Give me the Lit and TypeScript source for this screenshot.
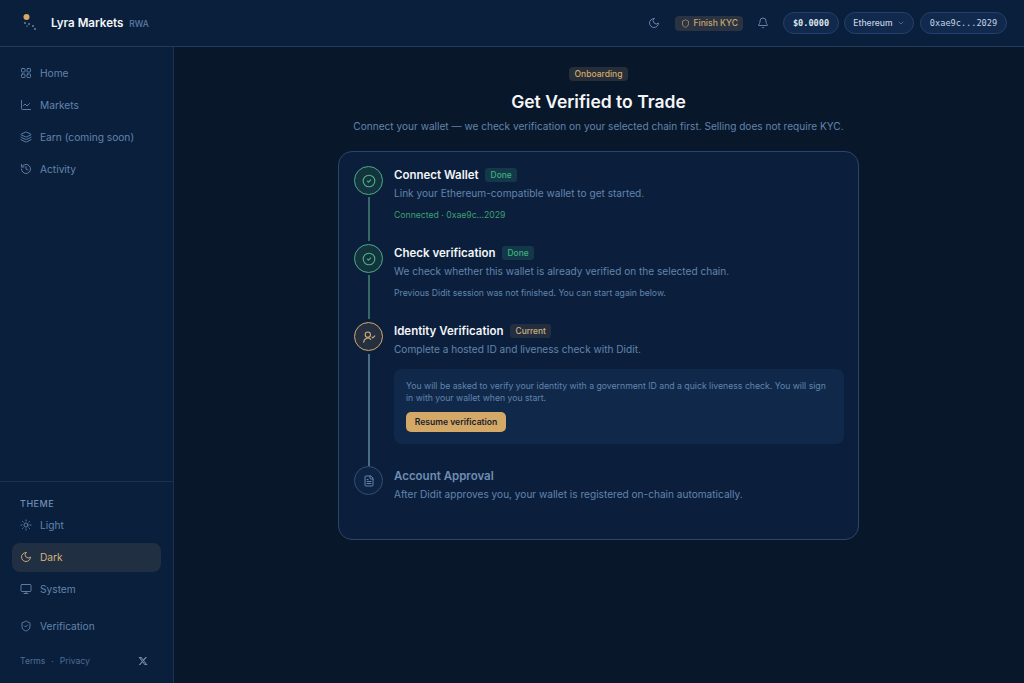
import { LitElement, html, css, svg } from "lit";
import { customElement } from "lit/decorators.js";

const ic = (body: unknown, size = 12, sw = 1.8) => html`<svg width=${size} height=${size} viewBox="0 0 24 24" fill="none" stroke="currentColor" stroke-width=${sw} stroke-linecap="round" stroke-linejoin="round">${body}</svg>`;

const I = {
  home: svg`<rect x="3" y="3" width="7" height="7" rx="1.5"/><rect x="14" y="3" width="7" height="7" rx="1.5"/><rect x="3" y="14" width="7" height="7" rx="1.5"/><rect x="14" y="14" width="7" height="7" rx="1.5"/>`,
  chart: svg`<path d="M3 3v16a2 2 0 0 0 2 2h16"/><path d="m19 9-5 5-4-4-3 3"/>`,
  layers: svg`<path d="M12.83 2.18a2 2 0 0 0-1.66 0L2.6 6.08a1 1 0 0 0 0 1.83l8.58 3.91a2 2 0 0 0 1.66 0l8.58-3.9a1 1 0 0 0 0-1.83z"/><path d="M2 12a1 1 0 0 0 .58.91l8.6 3.91a2 2 0 0 0 1.65 0l8.58-3.9A1 1 0 0 0 22 12"/><path d="M2 17a1 1 0 0 0 .58.91l8.6 3.91a2 2 0 0 0 1.65 0l8.58-3.9A1 1 0 0 0 22 17"/>`,
  history: svg`<path d="M3 12a9 9 0 1 0 9-9 9.75 9.75 0 0 0-6.74 2.74L3 8"/><path d="M3 3v5h5"/><path d="M12 7v5l4 2"/>`,
  sun: svg`<circle cx="12" cy="12" r="4"/><path d="M12 2v2M12 20v2M4.93 4.93l1.41 1.41M17.66 17.66l1.41 1.41M2 12h2M20 12h2M6.34 17.66l-1.41 1.41M19.07 4.93l-1.41 1.41"/>`,
  moon: svg`<path d="M12 3a6 6 0 0 0 9 9 9 9 0 1 1-9-9Z"/>`,
  monitor: svg`<rect x="2" y="3" width="20" height="14" rx="2"/><path d="M8 21h8M12 17v4"/>`,
  shieldCheck: svg`<path d="M20 13c0 5-3.5 7.5-7.66 8.95a1 1 0 0 1-.67-.01C7.5 20.5 4 18 4 13V6a1 1 0 0 1 1-1c2 0 4.5-1.2 6.24-2.72a1.17 1.17 0 0 1 1.52 0C14.51 3.81 17 5 19 5a1 1 0 0 1 1 1z"/><path d="m9 12 2 2 4-4"/>`,
  shield: svg`<path d="M20 13c0 5-3.5 7.5-7.66 8.95a1 1 0 0 1-.67-.01C7.5 20.5 4 18 4 13V6a1 1 0 0 1 1-1c2 0 4.5-1.2 6.24-2.72a1.17 1.17 0 0 1 1.52 0C14.51 3.81 17 5 19 5a1 1 0 0 1 1 1z"/>`,
  bell: svg`<path d="M10.27 21a2 2 0 0 0 3.46 0"/><path d="M3.26 15.33A1 1 0 0 0 4 17h16a1 1 0 0 0 .74-1.67C19.41 13.96 18 12.5 18 8A6 6 0 0 0 6 8c0 4.5-1.41 5.96-2.74 7.33"/>`,
  chevron: svg`<path d="m6 9 6 6 6-6"/>`,
  check: svg`<circle cx="12" cy="12" r="10"/><path d="m9 12 2 2 4-4"/>`,
  userCheck: svg`<path d="M3 21a7 7 0 0 1 12-5"/><circle cx="10" cy="8" r="4.5"/><path d="m17 12 1.5 1.5 3.5-3.5"/>`,
  file: svg`<path d="M15 2H6a2 2 0 0 0-2 2v16a2 2 0 0 0 2 2h12a2 2 0 0 0 2-2V7Z"/><path d="M14 2v4a2 2 0 0 0 2 2h4"/><path d="M16 13H8M16 17H8M10 9H8"/>`,
};

@customElement("app-root")
export class AppRoot extends LitElement {
  static styles = css`
    :host { display: block; width: 1024px; height: 683px; overflow: hidden; background: #081729; font-family: Inter, "Noto Sans", sans-serif; color: #f4f6f8; }
    * { box-sizing: border-box; }
    svg { display: block; flex: none; }
    .top { height: 47px; background: #0a1f3c; border-bottom: 1px solid #233a5a; display: flex; align-items: center; padding: 0 17px 0 19px; }
    .logo { width: 22px; height: 22px; margin-right: 10px; }
    .brand { font-size: 11.6px; font-weight: 600; color: #f3f5f7; }
    .rwa { font-size: 8.5px; font-weight: 500; color: #5b7ca6; margin-left: 6px; margin-top: 2px; }
    .spacer { flex: 1; }
    .tool { color: #6f8db3; display: flex; }
    .kyc { display: flex; align-items: center; gap: 3px; height: 15px; padding: 0 5px 0 6px; background: #2a3341; border-radius: 4px; color: #c9a56f; font-size: 8.6px; font-weight: 500; margin: 0 14px 0 15px; }
    .pill { height: 22px; border: 1px solid #24406a; background: #10294d; border-radius: 11px; display: flex; align-items: center; justify-content: center; font-size: 8.6px; font-weight: 500; color: #c5d2e2; }
    .mono { font-family: "DejaVu Sans Mono", "Liberation Mono", monospace; font-size: 8.6px; }
    .bal { width: 56px; margin: 0 5px 0 14px; font-weight: 700; color: #dfe6ee; }
    .net { width: 70px; gap: 4px; margin-right: 6px; }
    .net svg { color: #6f8db3; }
    .addr { width: 87px; }
    .body { display: flex; height: 636px; }
    .side { width: 174px; background: #0a1f3c; border-right: 1px solid #1c3150; display: flex; flex-direction: column; padding-top: 10px; }
    .nav { padding: 0 12px; display: flex; flex-direction: column; }
    .item { height: 32px; display: flex; align-items: center; gap: 8px; padding: 0 8px; font-size: 10.2px; color: #6284ad; border-radius: 8px; }
    .grow { flex: 1; }
    .theme { border-top: 1px solid #1c3150; padding-top: 16px; height: 164px; }
    .label { font-size: 9px; font-weight: 500; letter-spacing: 0.5px; color: #6f8db3; padding: 0 20px; line-height: 11px; }
    .item.active { background: #212f42; color: #d4b27c; height: 29px; margin: 1.5px 0; }
    .ver { height: 30px; margin-top: 6px; }
    .foot { display: flex; align-items: center; padding: 0 25px 6px 20px; font-size: 8.6px; color: #4d6c93; height: 38px; gap: 6px; }
    .foot .x { margin-left: auto; color: #7f97b5; }
    main { flex: 1; display: flex; flex-direction: column; align-items: center; padding: 20px 1px 0 0; }
    .tag { height: 14px; padding: 0 6px; background: #262e3a; color: #d4a968; font-size: 8.5px; font-weight: 500; border-radius: 4px; display: flex; align-items: center; }
    h1 { margin: 8px 0 0; font-size: 17.5px; line-height: 26px; font-weight: 600; color: #f5f6f8; }
    .sub { margin: 3px 0 0; font-size: 10.1px; line-height: 16px; color: #6284ad; }
    .card { width: 521px; height: 389px; margin-top: 17px; background: #0b1f3c; border: 1px solid #2b4568; border-radius: 14px; padding: 14px 14px 0 15px; display: flex; flex-direction: column; }
    .step { display: flex; gap: 11px; }
    .rail { width: 29px; flex: none; display: flex; flex-direction: column; align-items: center; }
    .dot { width: 29px; height: 29px; flex: none; border-radius: 50%; display: flex; align-items: center; justify-content: center; border: 1.5px solid; }
    .done .dot { border-color: #49ad7c; background: #13343f; color: #4fb583; }
    .cur .dot { border-color: #d4a968; background: #242f3f; color: #d4b27c; }
    .todo .dot { border-color: #35506f; background: #0d2444; color: #6f8db3; }
    .line { width: 2px; flex: 1; background: #2f4e68; margin: 2px 0 3px; }
    .done .line { background: #356a66; }
    .cur .line { background: #4a6f85; margin-top: 3px; margin-bottom: 0; }
    .txt { flex: 1; padding-top: 1px; }
    .todo .txt { padding-top: 2px; }
    .head { display: flex; align-items: center; gap: 6.5px; height: 15px; }
    .title { font-size: 11.5px; font-weight: 600; color: #f3f5f7; }
    .todo .title { color: #6f8db3; }
    .chip { height: 14px; padding: 0 5.5px; border-radius: 3px; font-size: 8.4px; font-weight: 500; display: flex; align-items: center; }
    .chip.ok { background: #13384a; color: #41b17b; }
    .chip.now { background: #232f40; color: #d4b27c; }
    .desc { font-size: 10.1px; line-height: 14px; color: #6284ad; margin-top: 4px; }
    .note { font-size: 8.66px; line-height: 12px; margin-top: 9px; color: #6284ad; }
    .note.g { color: #3e9f72; }
    .s1 { height: 78px; }
    .s3 { height: 144px; }
    .panel { margin-top: 13px; height: 75px; background: #10294a; border-radius: 8px; padding: 11px 12px; font-size: 8.7px; line-height: 12px; color: #6284ad; }
    .btn { margin-top: 8px; height: 20px; width: 100px; background: #d4a968; color: #18202c; border: 0; border-radius: 5px; font: 600 8.6px Inter, sans-serif; padding: 0; display: block; }
  `;

  nav(icon: unknown, label: string, cls = "") {
    return html`<div class="item ${cls}">${ic(icon, 12)}<span>${label}</span></div>`;
  }

  render() {
    return html`
      <header class="top">
        <svg class="logo" viewBox="0 0 22 22" fill="#dfe6ee">
          <circle cx="7.5" cy="5" r="3" fill="#d4a968"/>
          <circle cx="6" cy="11" r="0.7"/><circle cx="10" cy="12" r="0.7"/><circle cx="14" cy="14" r="0.7"/><circle cx="16" cy="17" r="0.7"/><circle cx="8" cy="14" r="0.5"/>
        </svg>
        <span class="brand">Lyra Markets</span><span class="rwa">RWA</span>
        <span class="spacer"></span>
        <span class="tool">${ic(I.moon, 12)}</span>
        <span class="kyc">${ic(I.shield, 9)}Finish KYC</span>
        <span class="tool">${ic(I.bell, 12)}</span>
        <span class="pill mono bal">$0.0000</span>
        <span class="pill net">Ethereum ${ic(I.chevron, 8)}</span>
        <span class="pill mono addr">0xae9c...2029</span>
      </header>
      <div class="body">
        <aside class="side">
          <nav class="nav">
            ${this.nav(I.home, "Home")}
            ${this.nav(I.chart, "Markets")}
            ${this.nav(I.layers, "Earn (coming soon)")}
            ${this.nav(I.history, "Activity")}
          </nav>
          <div class="grow"></div>
          <div class="theme">
            <div class="label">THEME</div>
            <div class="nav">
              ${this.nav(I.sun, "Light")}
              ${this.nav(I.moon, "Dark", "active")}
              ${this.nav(I.monitor, "System")}
              ${this.nav(I.shieldCheck, "Verification", "ver")}
            </div>
          </div>
          <div class="foot">
            <span>Terms</span><span>·</span><span>Privacy</span>
            <svg class="x" width="10" height="10" viewBox="0 0 24 24" fill="currentColor"><path d="M18.24 2.25h3.31l-7.23 8.26 8.5 11.24H16.17l-5.21-6.82-5.97 6.82H1.68l7.73-8.84L1.25 2.25H8.08l4.71 6.23zm-1.16 17.52h1.83L7.08 4.13H5.12z"/></svg>
          </div>
        </aside>
        <main>
          <div class="tag">Onboarding</div>
          <h1>Get Verified to Trade</h1>
          <p class="sub">Connect your wallet — we check verification on your selected chain first. Selling does not require KYC.</p>
          <section class="card">
            <div class="step done s1">
              <div class="rail"><div class="dot">${ic(I.check, 14)}</div><div class="line"></div></div>
              <div class="txt">
                <div class="head"><span class="title">Connect Wallet</span><span class="chip ok">Done</span></div>
                <div class="desc">Link your Ethereum-compatible wallet to get started.</div>
                <div class="note g">Connected · 0xae9c...2029</div>
              </div>
            </div>
            <div class="step done s1">
              <div class="rail"><div class="dot">${ic(I.check, 14)}</div><div class="line"></div></div>
              <div class="txt">
                <div class="head"><span class="title">Check verification</span><span class="chip ok">Done</span></div>
                <div class="desc">We check whether this wallet is already verified on the selected chain.</div>
                <div class="note">Previous Didit session was not finished. You can start again below.</div>
              </div>
            </div>
            <div class="step cur s3">
              <div class="rail"><div class="dot">${ic(I.userCheck, 14)}</div><div class="line"></div></div>
              <div class="txt">
                <div class="head"><span class="title">Identity Verification</span><span class="chip now">Current</span></div>
                <div class="desc">Complete a hosted ID and liveness check with Didit.</div>
                <div class="panel">
                  You will be asked to verify your identity with a government ID and a quick liveness check. You will sign in with your wallet when you start.
                  <button class="btn">Resume verification</button>
                </div>
              </div>
            </div>
            <div class="step todo">
              <div class="rail"><div class="dot">${ic(I.file, 12)}</div></div>
              <div class="txt">
                <div class="head"><span class="title">Account Approval</span></div>
                <div class="desc">After Didit approves you, your wallet is registered on-chain automatically.</div>
              </div>
            </div>
          </section>
        </main>
      </div>
    `;
  }
}
